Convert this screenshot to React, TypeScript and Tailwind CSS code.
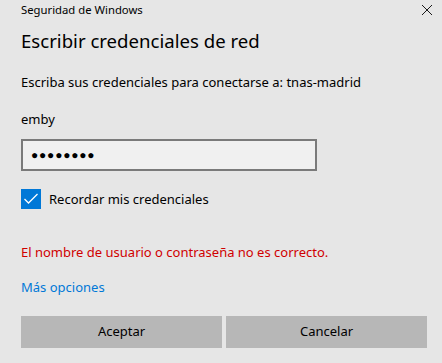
export default function App() {
  return (
    <div
      className="w-[442px] h-[363px] bg-[#e6e6e6] text-[#000] overflow-hidden"
      style={{ fontFamily: '"Segoe UI", "Noto Sans", "Open Sans", sans-serif' }}
    >
      <div className="flex items-start justify-between pl-[21px] pr-[8px] h-[22px]">
        <span className="text-[11.3px] leading-[20px] text-[#000]">Seguridad de Windows</span>
        <svg width="12" height="12" viewBox="0 0 12 12" className="mt-[4px] mr-[1px]">
          <path d="M1 1 L11 11 M11 1 L1 11" stroke="#1a1a1a" strokeWidth="1" />
        </svg>
      </div>

      <div className="pl-[21px] pr-[15px]">
        <h1 className="text-[18.6px] leading-[28px] mt-[5px] text-[#000]">Escribir credenciales de red</h1>

        <p className="text-[13px] leading-[18px] mt-[18px]">
          Escriba sus credenciales para conectarse a: tnas-madrid
        </p>

        <p className="text-[13px] leading-[18px] mt-[19px]">emby</p>

        <div className="mt-[11px] w-[296px] h-[32px] border-2 border-[#7a7a7a] bg-[#f0f0f0] flex items-center pl-[8px]">
          <span className="text-[12px] tracking-[0.8px] leading-none">●●●●●●●●</span>
        </div>

        <div className="mt-[18px] flex items-center gap-[8px]">
          <div className="w-[20px] h-[20px] bg-[#0078d7] flex items-center justify-center">
            <svg width="16" height="12" viewBox="0 0 16 12">
              <path d="M1.5 6 L5.5 10 L14.5 1" fill="none" stroke="#fff" strokeWidth="1.3" />
            </svg>
          </div>
          <span className="text-[13px] leading-[20px]">Recordar mis credenciales</span>
        </div>

        <p className="mt-[34px] text-[13px] leading-[18px] text-[#d00000]">
          El nombre de usuario o contraseña no es correcto.
        </p>

        <p className="mt-[17px] text-[13px] leading-[18px] text-[#0078d7]">Más opciones</p>

        <div className="mt-[20px] flex gap-[4px]">
          <button className="w-[201px] h-[32px] bg-[#b7b7b7] text-[13px] text-[#000]">Aceptar</button>
          <button className="w-[201px] h-[32px] bg-[#b7b7b7] text-[13px] text-[#000]">Cancelar</button>
        </div>
      </div>
    </div>
  )
}
